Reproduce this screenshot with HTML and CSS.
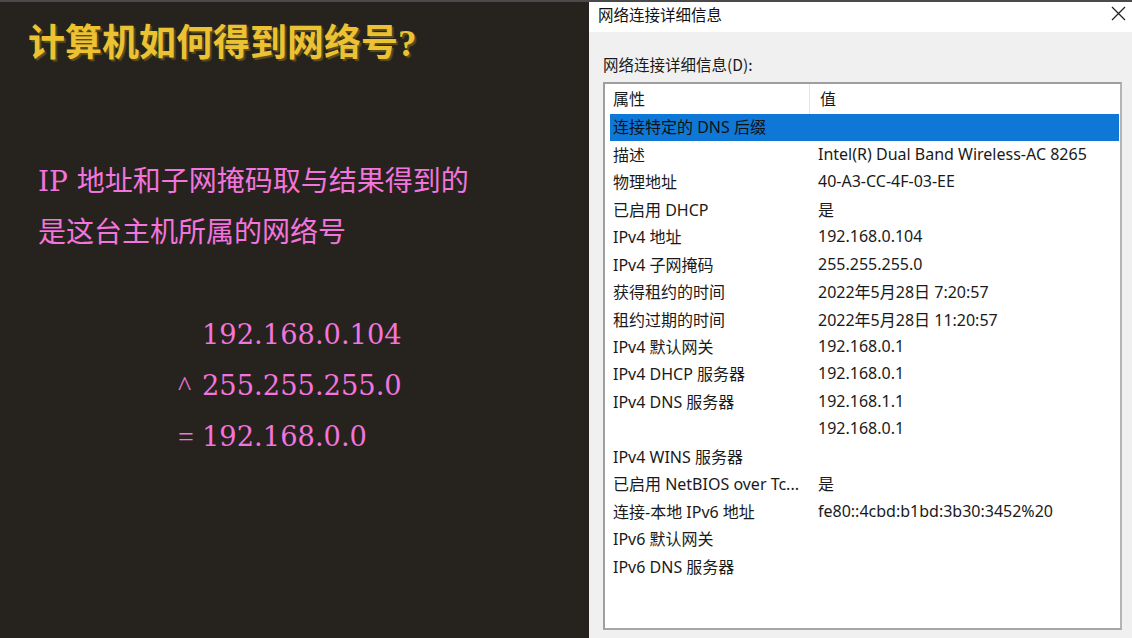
FILE: index.html
```html
<!DOCTYPE html>
<html lang="zh-CN">
<head>
<meta charset="utf-8">
<title>计算机如何得到网络号?</title>
<link rel="stylesheet" href="styles.css">
</head>
<body>
<div class="topstrip"></div>
<div class="page">
  <section class="slide">
    <h1 class="title">计算机如何得到网络号?</h1>
    <div class="desc">
      <p>IP 地址和子网掩码取与结果得到的</p>
      <p>是这台主机所属的网络号</p>
    </div>
    <div class="calc">
      <div class="calc-line"><span class="op"></span><span>192.168.0.104</span></div>
      <div class="calc-line"><span class="op">^</span><span>255.255.255.0</span></div>
      <div class="calc-line"><span class="op">=</span><span>192.168.0.0</span></div>
    </div>
  </section>
  <section class="dialog">
    <div class="titlebar">
      <span class="dlg-title">网络连接详细信息</span>
      <svg class="close" width="15" height="15" viewBox="0 0 15 15"><path d="M1 1 L14 14 M14 1 L1 14" stroke="#222" stroke-width="1.3" fill="none"/></svg>
    </div>
    <div class="dlg-body">
      <div class="label">网络连接详细信息(D):</div>
      <div class="listbox">
        <div class="lhead">
          <div class="hc hc1">属性</div>
          <div class="hc hc2">值</div>
        </div>
        <div class="row sel"><div class="c1">连接特定的 DNS 后缀</div><div class="c2"></div></div>
        <div class="row"><div class="c1">描述</div><div class="c2">Intel(R) Dual Band Wireless-AC 8265</div></div>
        <div class="row"><div class="c1">物理地址</div><div class="c2">40-A3-CC-4F-03-EE</div></div>
        <div class="row"><div class="c1">已启用 DHCP</div><div class="c2">是</div></div>
        <div class="row"><div class="c1">IPv4 地址</div><div class="c2">192.168.0.104</div></div>
        <div class="row"><div class="c1">IPv4 子网掩码</div><div class="c2">255.255.255.0</div></div>
        <div class="row"><div class="c1">获得租约的时间</div><div class="c2">2022年5月28日 7:20:57</div></div>
        <div class="row"><div class="c1">租约过期的时间</div><div class="c2">2022年5月28日 11:20:57</div></div>
        <div class="row"><div class="c1">IPv4 默认网关</div><div class="c2">192.168.0.1</div></div>
        <div class="row"><div class="c1">IPv4 DHCP 服务器</div><div class="c2">192.168.0.1</div></div>
        <div class="row"><div class="c1">IPv4 DNS 服务器</div><div class="c2">192.168.1.1</div></div>
        <div class="row"><div class="c1"></div><div class="c2">192.168.0.1</div></div>
        <div class="row"><div class="c1">IPv4 WINS 服务器</div><div class="c2"></div></div>
        <div class="row"><div class="c1">已启用 NetBIOS over Tc...</div><div class="c2">是</div></div>
        <div class="row"><div class="c1">连接-本地 IPv6 地址</div><div class="c2">fe80::4cbd:b1bd:3b30:3452%20</div></div>
        <div class="row"><div class="c1">IPv6 默认网关</div><div class="c2"></div></div>
        <div class="row"><div class="c1">IPv6 DNS 服务器</div><div class="c2"></div></div>
      </div>
    </div>
  </section>
</div>
</body>
</html>
```
FILE: styles.css
```css
* { box-sizing: border-box; }
html, body { margin: 0; padding: 0; }
body {
  width: 1132px;
  height: 638px;
  overflow: hidden;
  background: #26231e;
  display: flex;
  flex-direction: column;
}
.topstrip {
  height: 2px;
  background: #4a4a4a;
  flex: none;
}
.page {
  flex: 1;
  display: flex;
  min-height: 0;
}
.slide {
  width: 589px;
  flex: none;
  background: #26231e;
  padding: 23px 0 0 28px;
  font-family: "Liberation Serif", "Noto Sans CJK SC", serif;
}
.title {
  margin: 0;
  font-family: "Liberation Serif", "Noto Sans CJK SC", serif;
  font-size: 37px;
  line-height: 37px;
  font-weight: 700;
  color: #ecc233;
  text-shadow: 2px 2px 1px #5e4f1c;
}
.desc {
  margin-top: 94px;
  padding-left: 10px;
  color: #f274dc;
  font-family: "DejaVu Serif", "Noto Sans CJK SC", serif;
  font-size: 28px;
  line-height: 51px;
}
.desc p { margin: 0; }
.calc {
  margin-top: 51px;
  padding-left: 150px;
  color: #f274dc;
  font-family: "DejaVu Serif", serif;
  font-size: 27.3px;
  line-height: 51px;
}
.calc-line { display: flex; }
.op {
  width: 24px;
  flex: none;
  font-family: "Liberation Serif", serif;
  font-size: 28px;
}

.dialog {
  flex: 1;
  background: #f0f0f0;
  display: flex;
  flex-direction: column;
  font-family: "Noto Sans", "Noto Sans CJK SC", sans-serif;
  color: #1a1a1a;
}
.titlebar {
  height: 30px;
  background: #ffffff;
  display: flex;
  align-items: flex-start;
  justify-content: space-between;
  padding: 1px 6px 0 9px;
  flex: none;
}
.dlg-title {
  font-family: "Noto Sans CJK SC", sans-serif;
  font-size: 15.5px;
  line-height: 22px;
  color: #111;
}
.close { display: block; margin-top: 3px; }
.dlg-body {
  flex: 1;
  display: flex;
  flex-direction: column;
  padding: 22px 10px 8px 14px;
  min-height: 0;
}
.label {
  font-family: "Noto Sans CJK SC", sans-serif;
  font-size: 15.5px;
  line-height: 20px;
  margin-bottom: 8px;
}
.listbox {
  flex: 1;
  background: #ffffff;
  border: 2px solid #adadad;
  border-color: #9f9f9f #b4b4b4 #a6a6a6 #9f9f9f;
  font-size: 16px;
}
.lhead {
  display: flex;
  height: 30px;
  align-items: stretch;
}
.hc { display: flex; align-items: center; padding-bottom: 3px; }
.hc1 {
  width: 205px;
  padding-left: 8px;
  border-right: 1px solid #e5e5e5;
}
.hc2 { padding-left: 10px; }
.row {
  display: flex;
  height: 27.47px;
  align-items: center;
  padding-bottom: 3px;
  margin: 0 1px 0 5px;
  white-space: nowrap;
}
.row.sel { background: #0f78d7; color: #111; }
.c1 { width: 200px; padding-left: 3px; flex: none; }
.c2 { padding-left: 8px; }
```
